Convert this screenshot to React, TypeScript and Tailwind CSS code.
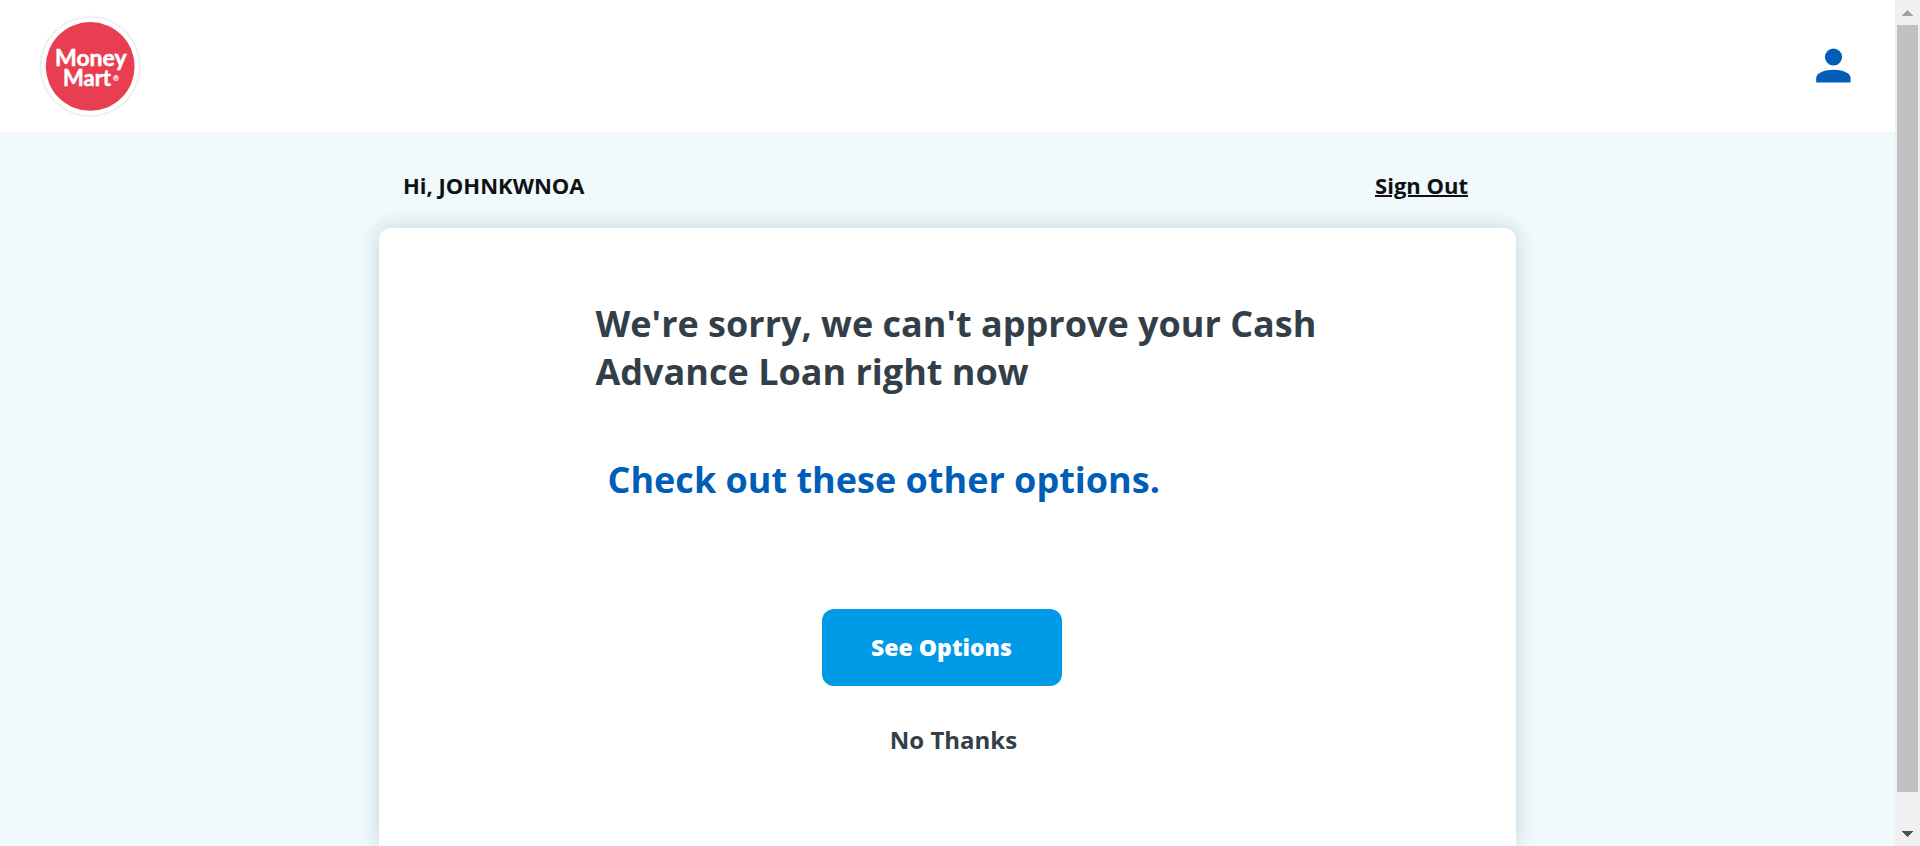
import React from "react";

function Logo() {
  return (
    <svg viewBox="0 0 104 104" className="size-26" role="img" aria-label="Money Mart">
      <circle cx="52.2" cy="52.4" r="51" fill="#f8f8f8" />
      <circle cx="52.2" cy="52.4" r="50" fill="#ebebeb" />
      <circle cx="52.2" cy="52.4" r="48.8" fill="#ffffff" />
      <circle cx="52.2" cy="52.4" r="44.4" fill="#e83e52" />
      <g fill="#ffffff" stroke="#ffffff" strokeWidth="0.5" fontFamily="Lato, sans-serif" fontWeight="700">
        <text x="17" y="52" fontSize="23">Money</text>
        <text x="25" y="72" fontSize="22">
          Mart
          <tspan x="75" y="67" fontSize="7" fontWeight="400" strokeWidth="0.2">®</tspan>
        </text>
      </g>
    </svg>
  );
}

function PersonIcon() {
  return (
    <svg viewBox="0 0 36 36" className="size-9" aria-hidden="true">
      <circle cx="18.5" cy="9" r="8.6" fill="#005eb8" />
      <path d="M1.2 34.6V30C1.2 25 9.5 21.8 18.5 21.8S35.6 25 35.6 30v4.6Z" fill="#005eb8" />
    </svg>
  );
}

function Scrollbar() {
  return (
    <div className="flex w-[25px] shrink-0 flex-col bg-[#f0f0f0]" aria-hidden="true">
      <div className="flex h-[25px] items-center justify-center">
        <svg viewBox="0 0 11 6" className="h-[6px] w-[11px]" shapeRendering="crispEdges">
          <path d="M0 6 5.5 0 11 6Z" fill="#a3a3a3" />
        </svg>
      </div>
      <div className="mx-[2px] flex-[767] bg-[#c0c0c0]" />
      <div className="flex-[29]" />
      <div className="flex h-[25px] items-center justify-center">
        <svg viewBox="0 0 11 6" className="h-[6px] w-[11px]" shapeRendering="crispEdges">
          <path d="M0 0H11L5.5 6Z" fill="#505050" />
        </svg>
      </div>
    </div>
  );
}

export default function App() {
  return (
    <div className="flex h-screen font-['Open_Sans',sans-serif] font-bold">
      <div className="flex min-w-0 flex-1 flex-col overflow-hidden bg-[#f0f9fc]">
        <header className="flex h-[132px] shrink-0 items-center justify-between bg-white pr-11 pl-[38px]">
          <a href="#home" aria-label="Money Mart home">
            <Logo />
          </a>
          <button type="button" aria-label="Account">
            <PersonIcon />
          </button>
        </header>
        <main className="mx-auto flex w-3/5 flex-1 flex-col">
          <div className="flex h-24 shrink-0 items-center justify-between pt-[10px] pr-12 pl-6 text-[22px] leading-8 text-[#111111]">
            <p>Hi, JOHNKWNOA</p>
            <a href="#sign-out" className="underline decoration-2">
              Sign Out
            </a>
          </div>
          <section className="flex flex-1 flex-col items-center rounded-t-xl bg-white pt-[72px] pl-3 text-[#333f48] shadow-[0_0_20px_rgba(0,60,90,0.2)]">
            <div className="flex w-[716px] max-w-full flex-col">
              <h1 className="-mr-4 text-[36px] leading-12">
                We're sorry, we can't approve your Cash Advance Loan right now
              </h1>
              <h2 className="mt-15 pl-3 text-[36px] leading-12 text-[#005eb8]">
                Check out these other options.
              </h2>
              <div className="mt-[105px] flex flex-col items-center">
                <button
                  type="button"
                  className="mr-6 h-[77px] w-60 rounded-xl bg-[#009ae6] text-[23px] font-extrabold text-white"
                >
                  See Options
                </button>
                <button type="button" className="mt-9 text-[24px] leading-9">
                  No Thanks
                </button>
              </div>
            </div>
          </section>
        </main>
      </div>
      <Scrollbar />
    </div>
  );
}
